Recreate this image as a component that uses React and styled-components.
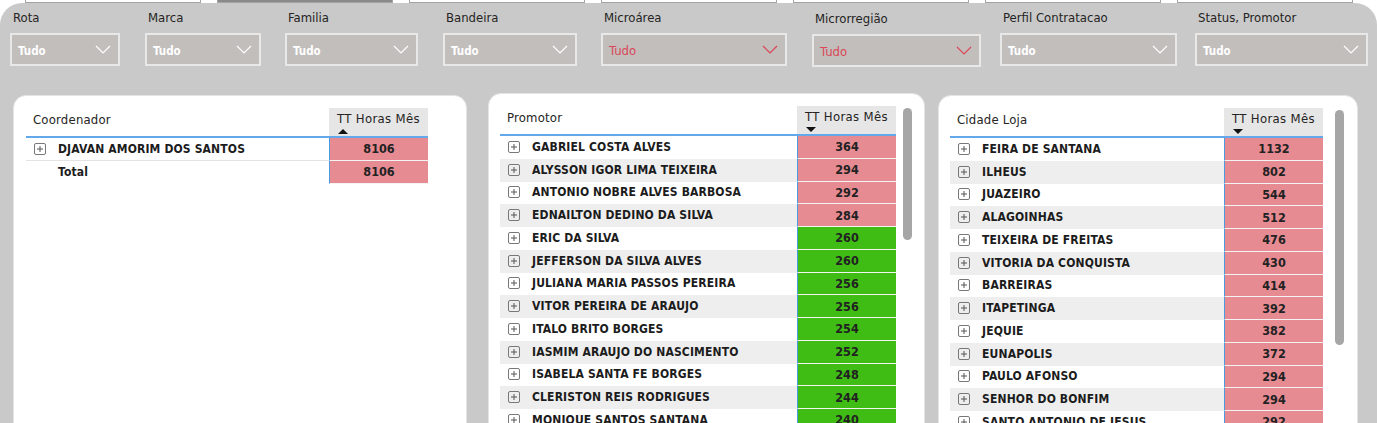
import React from "react";
import styled, { createGlobalStyle } from "styled-components";

const Global = createGlobalStyle`
  html, body { margin: 0; padding: 0; background: #ffffff; }
  body { font-family: "DejaVu Sans Condensed", "DejaVu Sans", sans-serif; }
  * { box-sizing: border-box; }
`;

const Page = styled.div`
  width: 1377px;
  height: 423px;
  overflow: hidden;
  background: #ffffff;
`;

const TabStrip = styled.div`
  display: flex;
  gap: 16px;
  padding-left: 25px;
  height: 3px;
  overflow: hidden;
`;

const Tab = styled.div`
  width: 176px;
  height: 3px;
  flex: none;
  background: ${(p) => (p.$active ? "#8a8a8a" : "#ffffff")};
  border: 1px solid #a3a3a3;
  border-top: none;
`;

const Canvas = styled.div`
  background: #c9c9c9;
  border-radius: 22px 22px 0 0;
  height: 420px;
  overflow: hidden;
`;

const FilterRow = styled.div`
  display: flex;
  padding: 7px 0 0 10px;
`;

const FilterItem = styled.div`
  width: ${(p) => p.$w}px;
  flex: none;
  padding-top: ${(p) => p.$dy || 0}px;
`;

const FilterLabel = styled.div`
  font-size: 13px;
  line-height: 16px;
  height: 16px;
  color: #252423;
  padding-left: 3px;
  margin-bottom: 7px;
  white-space: nowrap;
`;

const Dropdown = styled.div`
  width: ${(p) => p.$w}px;
  height: 33px;
  background: #c1bebc;
  border: 2px solid #e8e8e8;
  display: flex;
  align-items: center;
  justify-content: space-between;
  padding: 0 7px 0 6px;
`;

const DropValue = styled.span`
  font-size: ${(p) => (p.$red ? "13px" : "11.5px")};
  font-weight: ${(p) => (p.$red ? 400 : 700)};
  color: ${(p) => (p.$red ? "#dc4656" : "#ffffff")};
  padding-top: 2px;
`;

const CardsRow = styled.div`
  display: flex;
  align-items: flex-start;
  padding-left: 13px;
  margin-top: 26px;
`;

const Card = styled.div`
  width: ${(p) => p.$w}px;
  margin-left: ${(p) => p.$ml || 0}px;
  margin-top: ${(p) => p.$mt || 0}px;
  height: 360px;
  flex: none;
  background: #ffffff;
  border-radius: 13px;
  border: 1px solid #e4e4e4;
  display: flex;
  align-items: flex-start;
  padding: 12px 0 0 ${(p) => p.$pl}px;
`;

const Table = styled.div`
  width: ${(p) => p.$w}px;
  flex: none;
`;

const HeaderRow = styled.div`
  display: grid;
  grid-template-columns: 1fr 99px;
  height: 30px;
  border-bottom: 2px solid #62a8ea;
`;

const HeadLabel = styled.div`
  font-size: 13px;
  line-height: 16px;
  color: #252423;
  padding: 4px 0 0 7px;
  letter-spacing: 0.2px;
`;

const HeadMeasure = styled.div`
  background: #e6e6e6;
  display: flex;
  justify-content: center;
  padding-top: 3px;
`;

const HeadInner = styled.div`
  display: flex;
  flex-direction: column;
  align-items: flex-start;
`;

const HeadText = styled.div`
  font-size: 13px;
  line-height: 16px;
  color: #252423;
  letter-spacing: 0.35px;
  white-space: nowrap;
`;

const Arrow = styled.svg`
  display: block;
  margin: 2px 0 0 1px;
`;

const Row = styled.div`
  display: grid;
  grid-template-columns: 1fr 99px;
  height: 22.75px;
`;

const NameCell = styled.div`
  display: flex;
  align-items: center;
  background: ${(p) => (p.$alt ? "#eeeeee" : "#ffffff")};
  border-bottom: 1px solid ${(p) => (p.$line ? "#e3e3e3" : "transparent")};
  padding-left: 8px;
  font-size: 12px;
  font-weight: 700;
  letter-spacing: 0.15px;
  color: #1c1c1c;
  white-space: nowrap;
  overflow: hidden;
`;

const IconSlot = styled.span`
  width: 24px;
  flex: none;
  display: flex;
  align-items: center;
`;

const ValueCell = styled.div`
  display: flex;
  align-items: center;
  justify-content: center;
  background: ${(p) => (p.$tone === "green" ? "#3fbd14" : "#e78b93")};
  border-left: 1px solid #4b9ae4;
  border-bottom: 1px solid #f3f3f3;
  font-size: 12.5px;
  font-weight: 700;
  color: #222222;
`;

const ScrollTrack = styled.div`
  width: 9px;
  flex: none;
  margin-left: ${(p) => p.$ml}px;
  padding-top: 2px;
`;

const ScrollThumb = styled.div`
  width: 9px;
  height: ${(p) => p.$h}px;
  border-radius: 5px;
  background: #a6a6a6;
`;

const Chevron = ({ red }) => (
  <svg width="16" height="9" viewBox="0 0 16 9">
    <polyline
      points="1,1 8,8 15,1"
      fill="none"
      stroke={red ? "#dc4656" : "#ffffff"}
      strokeWidth="1.2"
    />
  </svg>
);

const PlusBox = () => (
  <svg width="12" height="12" viewBox="0 0 12 12">
    <rect x="0.5" y="0.5" width="11" height="11" rx="1.5" fill="none" stroke="#787878" />
    <line x1="3" y1="6" x2="9" y2="6" stroke="#555" />
    <line x1="6" y1="3" x2="6" y2="9" stroke="#555" />
  </svg>
);

const filters = [
  { label: "Rota", w: 135, box: 110 },
  { label: "Marca", w: 140, box: 116 },
  { label: "Familia", w: 158, box: 133 },
  { label: "Bandeira", w: 158, box: 134 },
  { label: "Microárea", w: 211, box: 186, red: true },
  { label: "Microrregião", w: 188, box: 169, red: true, dy: 1 },
  { label: "Perfil Contratacao", w: 195, box: 177 },
  { label: "Status, Promotor", w: 175, box: 173 },
];

const promotores = [
  ["GABRIEL COSTA ALVES", 364, "pink"],
  ["ALYSSON IGOR LIMA TEIXEIRA", 294, "pink"],
  ["ANTONIO NOBRE ALVES BARBOSA", 292, "pink"],
  ["EDNAILTON DEDINO DA SILVA", 284, "pink"],
  ["ERIC DA SILVA", 260, "green"],
  ["JEFFERSON DA SILVA ALVES", 260, "green"],
  ["JULIANA MARIA PASSOS PEREIRA", 256, "green"],
  ["VITOR PEREIRA DE ARAUJO", 256, "green"],
  ["ITALO BRITO BORGES", 254, "green"],
  ["IASMIM ARAUJO DO NASCIMENTO", 252, "green"],
  ["ISABELA SANTA FE BORGES", 248, "green"],
  ["CLERISTON REIS RODRIGUES", 244, "green"],
  ["MONIQUE SANTOS SANTANA", 240, "green"],
];

const cidades = [
  ["FEIRA DE SANTANA", 1132],
  ["ILHEUS", 802],
  ["JUAZEIRO", 544],
  ["ALAGOINHAS", 512],
  ["TEIXEIRA DE FREITAS", 476],
  ["VITORIA DA CONQUISTA", 430],
  ["BARREIRAS", 414],
  ["ITAPETINGA", 392],
  ["JEQUIE", 382],
  ["EUNAPOLIS", 372],
  ["PAULO AFONSO", 294],
  ["SENHOR DO BONFIM", 294],
  ["SANTO ANTONIO DE JESUS", 292],
];

const Header = ({ label, up }) => (
  <HeaderRow>
    <HeadLabel>{label}</HeadLabel>
    <HeadMeasure>
      <HeadInner>
        <HeadText>TT Horas Mês</HeadText>
        <Arrow width="10" height="5" viewBox="0 0 10 5">
          {up ? <polygon points="0,5 10,5 5,0" fill="#111" /> : <polygon points="0,0 10,0 5,5" fill="#111" />}
        </Arrow>
      </HeadInner>
    </HeadMeasure>
  </HeaderRow>
);

export default function App() {
  return (
    <Page>
      <Global />
      <TabStrip>
        <Tab />
        <Tab $active />
        <Tab />
        <Tab />
        <Tab />
        <Tab />
        <Tab />
      </TabStrip>
      <Canvas>
        <FilterRow>
          {filters.map((f) => (
            <FilterItem key={f.label} $w={f.w} $dy={f.dy}>
              <FilterLabel>{f.label}</FilterLabel>
              <Dropdown $w={f.box}>
                <DropValue $red={f.red}>Tudo</DropValue>
                <Chevron red={f.red} />
              </Dropdown>
            </FilterItem>
          ))}
        </FilterRow>
        <CardsRow>
          <Card $w={454} $mt={2} $pl={12}>
            <Table $w={402}>
              <Header label="Coordenador" up />
              <Row>
                <NameCell $line>
                  <IconSlot>
                    <PlusBox />
                  </IconSlot>
                  DJAVAN AMORIM DOS SANTOS
                </NameCell>
                <ValueCell>8106</ValueCell>
              </Row>
              <Row>
                <NameCell>
                  <IconSlot />
                  Total
                </NameCell>
                <ValueCell>8106</ValueCell>
              </Row>
            </Table>
          </Card>
          <Card $w={437} $ml={21} $pl={11}>
            <Table $w={396}>
              <Header label="Promotor" />
              {promotores.map(([n, v, t], i) => (
                <Row key={n}>
                  <NameCell $alt={i % 2 === 1}>
                    <IconSlot>
                      <PlusBox />
                    </IconSlot>
                    {n}
                  </NameCell>
                  <ValueCell $tone={t}>{v}</ValueCell>
                </Row>
              ))}
            </Table>
            <ScrollTrack $ml={7}>
              <ScrollThumb $h={132} />
            </ScrollTrack>
          </Card>
          <Card $w={420} $ml={13} $mt={2} $pl={11}>
            <Table $w={373}>
              <Header label="Cidade Loja" />
              {cidades.map(([n, v], i) => (
                <Row key={n}>
                  <NameCell $alt={i % 2 === 1}>
                    <IconSlot>
                      <PlusBox />
                    </IconSlot>
                    {n}
                  </NameCell>
                  <ValueCell>{v}</ValueCell>
                </Row>
              ))}
            </Table>
            <ScrollTrack $ml={12}>
              <ScrollThumb $h={235} />
            </ScrollTrack>
          </Card>
        </CardsRow>
      </Canvas>
    </Page>
  );
}
